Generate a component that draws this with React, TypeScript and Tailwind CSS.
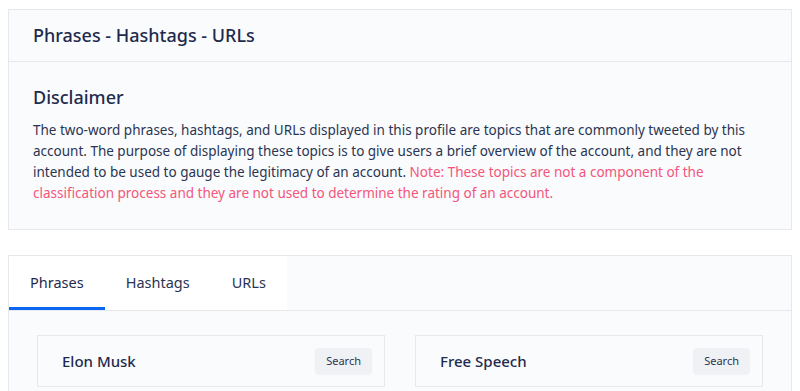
import React, { useState } from 'react';

const phrases = ['Elon Musk', 'Free Speech'];

function App() {
  const [tab, setTab] = useState('Phrases');
  const tabs = ['Phrases', 'Hashtags', 'URLs'];

  return (
    <div className="min-h-screen bg-white px-2 pt-[9px] text-[#1f2b4d]" style={{ fontFamily: '"Noto Sans", "Open Sans", sans-serif' }}>
      <div className="border border-[#e6e8ec] bg-[#fafbfd]">
        <div className="flex h-[52px] items-center border-b border-[#e6e8ec] px-6">
          <h2 className="text-[18px] font-medium">Phrases - Hashtags - URLs</h2>
        </div>
        <div className="px-6 pt-[23px] pb-[25px]">
          <h3 className="text-[18px] font-medium leading-6">Disclaimer</h3>
          <p className="mt-[11px] text-[13.5px] leading-[21px] text-[#2a3552]">
            The two-word phrases, hashtags, and URLs displayed in this profile are topics that are commonly tweeted by this
            account. The purpose of displaying these topics is to give users a brief overview of the account, and they are not
            intended to be used to gauge the legitimacy of an account.{' '}
            <span className="text-[#f4557a]">
              Note: These topics are not a component of the classification process and they are not used to determine the rating of an account.
            </span>
          </p>
        </div>
      </div>

      <div className="mt-[25px] border border-[#e6e8ec] bg-[#fafbfd]">
        <div className="flex h-[55px] border-b border-[#e6e8ec]">
          {tabs.map((t) => (
            <button
              key={t}
              onClick={() => setTab(t)}
              className={`relative flex items-center bg-white px-[21px] text-[14.5px] ${tab === t ? 'text-[#1f2b4d]' : 'text-[#2a3552]'}`}
            >
              {t}
              {tab === t && <span className="absolute bottom-0 left-0 right-0 h-[3px] bg-[#0a66f2]" />}
            </button>
          ))}
        </div>
        <div className="grid grid-cols-2 gap-[30px] px-7 pt-6 pb-6">
          {phrases.map((p) => (
            <div key={p} className="flex h-[52px] items-center justify-between border border-[#e6e8ec] pl-6 pr-3">
              <span className="text-[15px] font-medium">{p}</span>
              <button className="h-[26px] rounded bg-[#f0f1f4] px-[11px] text-[11px] text-[#2a3552] shadow-[0_1px_2px_rgba(0,0,0,0.04)]">
                Search
              </button>
            </div>
          ))}
        </div>
      </div>
    </div>
  );
}

export default App;
